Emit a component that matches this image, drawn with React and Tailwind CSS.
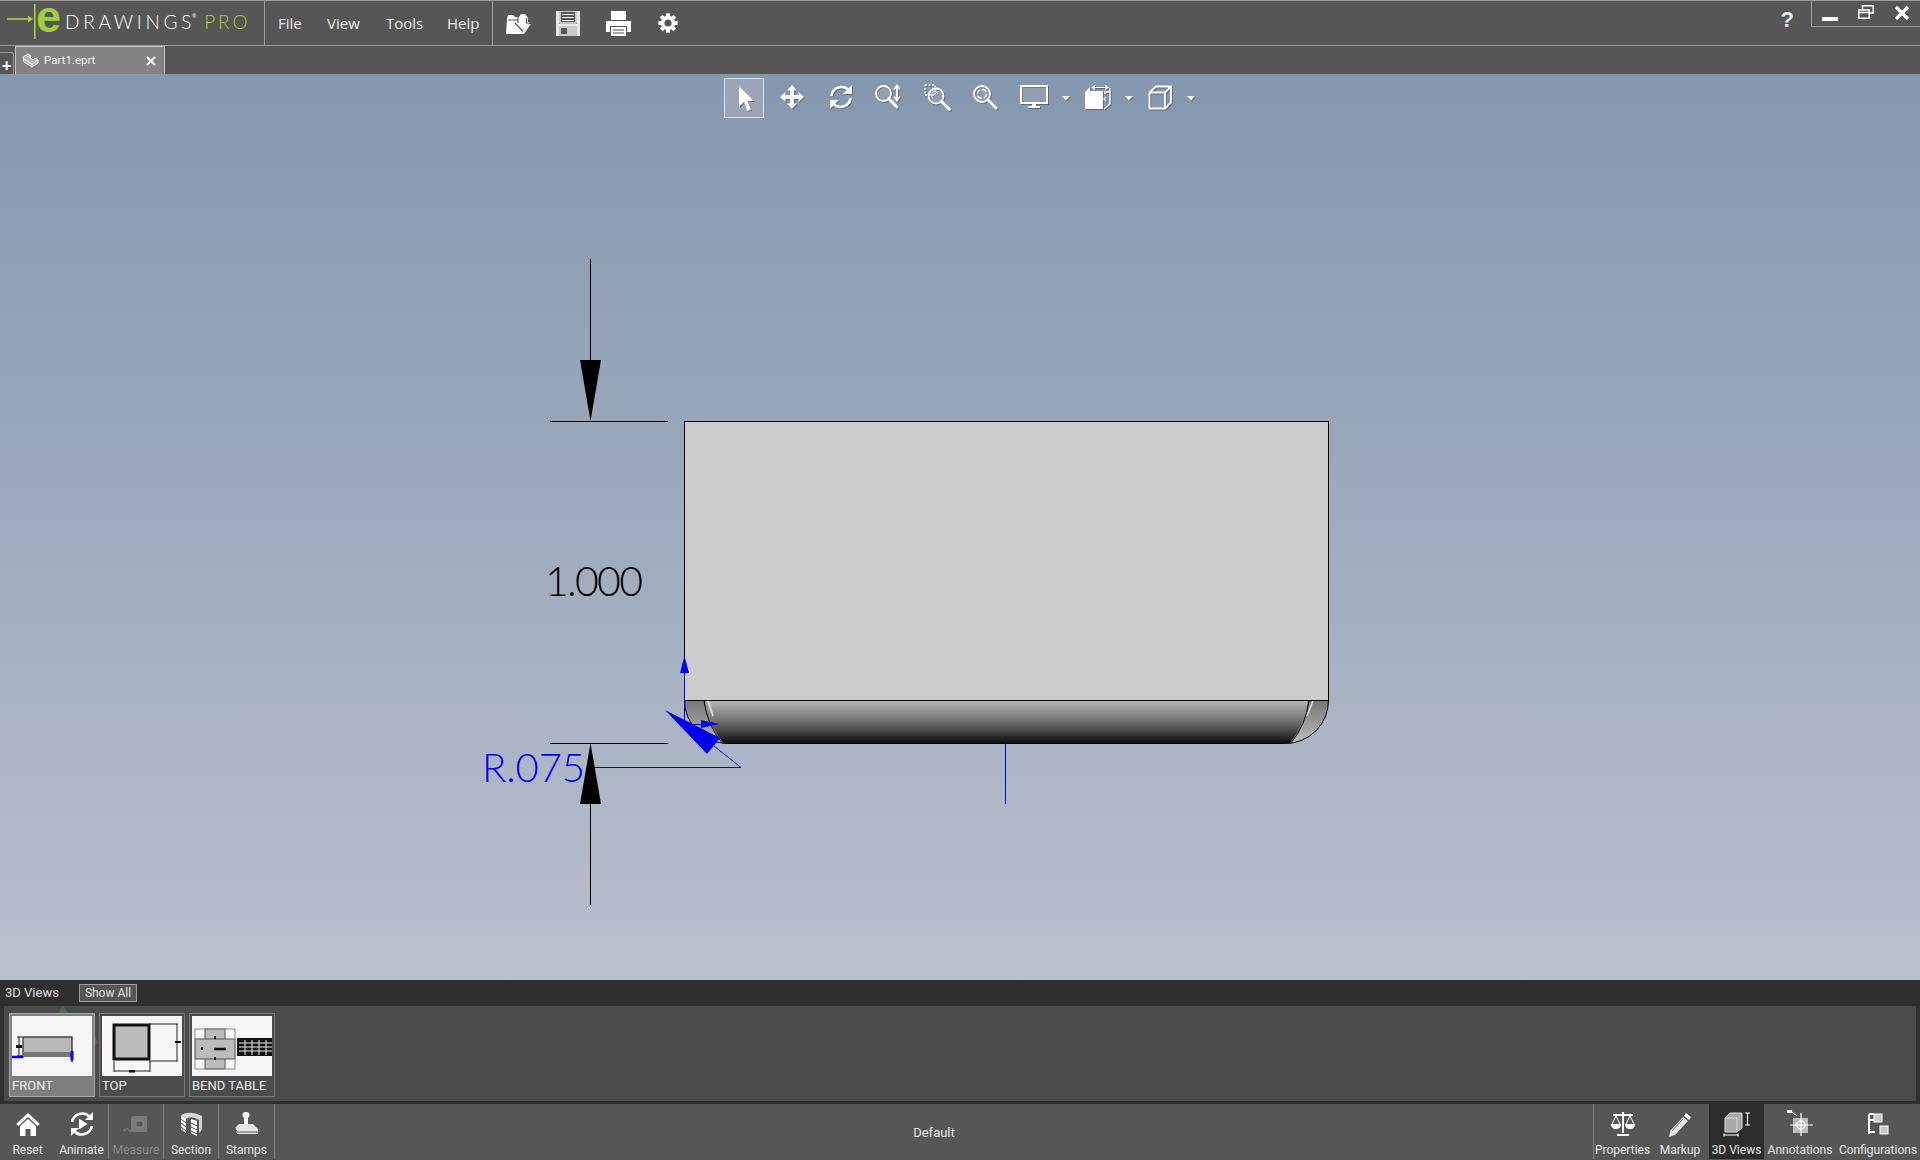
import React from "react";

const font = { fontFamily: '"Open Sans","Noto Sans",sans-serif' };
const roboto = { fontFamily: 'Roboto,"Open Sans",sans-serif' };

const OpenIcon = () => (
  <svg width="25" height="21" viewBox="0 0 25 21" className="block shrink-0">
    <path d="M1 6 L2 2 H7 L9 4 H13 L15 1 H19 L22 5 V9 H24 L17 21 H0 Z" fill="#fff" />
    <path d="M2 7 H12" stroke="#555655" strokeWidth="1" />
    <path d="M12 2 L12 10 M9 10 L17.5 19 L24 10 H20.5 V5" fill="none" stroke="#555655" strokeWidth="1.2" />
    <path d="M21 11 H25 L18 21 H15 Z" fill="#e8e8e8" />
  </svg>
);
const SaveIcon = () => (
  <svg width="24" height="25" viewBox="0 0 24 25" className="block shrink-0">
    <rect width="24" height="25" fill="#e6e6e6" />
    <rect x="3" y="0" width="18" height="13" fill="#555655" />
    <rect x="4" y="0" width="16" height="12" fill="none" stroke="#fff" strokeWidth="1.3" />
    <path d="M6 3.5 H18 M6 6.5 H18 M6 9.5 H18" stroke="#fff" strokeWidth="1.2" />
    <rect x="3" y="15" width="18" height="10" fill="#c9c9c9" />
    <rect x="5" y="17" width="6" height="6" fill="#555655" />
  </svg>
);
const PrintIcon = () => (
  <svg width="25" height="25" viewBox="0 0 25 25" className="block shrink-0">
    <path d="M5 0 H20 V9 H5 Z" fill="#fff" />
    <path d="M0 10 H25 V21 H21 V15 H4 V21 H0 Z" fill="#fff" />
    <path d="M5 16 H20 V25 H5 Z" fill="#fff" />
    <path d="M7 19 H18 M7 22 H18" stroke="#555655" strokeWidth="1.2" />
  </svg>
);
const GearIcon = () => (
  <svg width="20" height="20" viewBox="0 0 28 28" className="block shrink-0">
    <g fill="#fff">
      {[0, 45, 90, 135, 180, 225, 270, 315].map((a) => (
        <rect key={a} x="11.2" y="0.5" width="5.6" height="6" transform={`rotate(${a} 14 14)`} />
      ))}
    </g>
    <circle cx="14" cy="14" r="7.5" fill="none" stroke="#fff" strokeWidth="5" />
  </svg>
);

const shadow = { filter: "drop-shadow(1px 1px 0.6px rgba(60,70,85,.55))" };
const SIc = ({ w = 30, h = 30, children }) => (
  <svg width={w} height={h} viewBox={`0 0 ${w} ${h}`} className="block shrink-0" style={shadow}>
    {children}
  </svg>
);

const ToolBtn = ({ children, active, w = 40 }) => (
  <div
    className={
      "flex h-[40px] items-center justify-center shrink-0 " +
      (active ? "border border-[#dfe3e9] bg-[#9aa6b8]" : "pb-[2px]")
    }
    style={{ width: w }}
  >
    {children}
  </div>
);
const Caret = () => (
  <svg width="8" height="5" viewBox="0 0 8 5" className="block shrink-0" style={shadow}>
    <path d="M0 0 H8 L4 4.5 Z" fill="#fff" />
  </svg>
);

function Toolbar() {
  const mag = (cx, cy, r = 8.5) => (
    <>
      <circle cx={cx} cy={cy} r={r} fill="rgba(255,255,255,.14)" stroke="#fff" strokeWidth="1.8" />
      <path d={`M${cx + r * 0.72} ${cy + r * 0.72} L${cx + r + 6} ${cy + r + 6}`} stroke="#fff" strokeWidth="3" strokeLinecap="round" />
    </>
  );
  return (
    <div className="absolute left-[724px] top-[4px] flex items-center">
      <ToolBtn active>
        <SIc w={24} h={30}>
          <path d="M7 3 L7 24 L12 19 L15.5 28 L19 26.5 L15.5 18 L22 18 Z" fill="#fff" />
        </SIc>
      </ToolBtn>
      <ToolBtn w={56}>
        <SIc w={26} h={26}>
          <path d="M13 1 L18 6.5 H15 V11 H19.5 V8 L25 13 L19.5 18 V15 H15 V19.5 H18 L13 25 L8 19.5 H11 V15 H6.5 V18 L1 13 L6.5 8 V11 H11 V6.5 H8 Z" fill="#fff" />
        </SIc>
      </ToolBtn>
      <ToolBtn w={42}>
        <SIc w={28} h={28}>
          <path d="M4.5 13 A 10 10 0 0 1 22 7.5" fill="none" stroke="#fff" strokeWidth="2.6" />
          <path d="M25 2 L25 11 L16 11 Z" fill="#fff" />
          <path d="M23.5 15 A 10 10 0 0 1 6 20.5" fill="none" stroke="#fff" strokeWidth="2.6" />
          <path d="M3 26 L3 17 L12 17 Z" fill="#fff" />
        </SIc>
      </ToolBtn>
      <ToolBtn w={52}>
        <SIc w={28} h={28}>
          {mag(9.5, 10.5, 7.5)}
          <path d="M23 3 V17 M20 6.5 L23 2.5 L26 6.5 M20 13.5 L23 17.5 L26 13.5" fill="none" stroke="#fff" strokeWidth="1.8" />
        </SIc>
      </ToolBtn>
      <ToolBtn w={46}>
        <SIc w={28} h={28}>
          {mag(13, 13, 7.5)}
          <rect x="2" y="2" width="10" height="10" fill="none" stroke="#fff" strokeWidth="1.3" strokeDasharray="2 1.5" />
          <path d="M10 15 A 3.5 3.5 0 1 1 15 11" fill="none" stroke="#fff" strokeWidth="1" />
        </SIc>
      </ToolBtn>
      <ToolBtn w={50}>
        <SIc w={28} h={28}>
          {mag(11, 11, 8)}
          <circle cx="11" cy="11" r="4.5" fill="none" stroke="#fff" strokeWidth="1.4" strokeDasharray="5 2" />
        </SIc>
      </ToolBtn>
      <ToolBtn w={48}>
        <SIc w={28} h={26}>
          <rect x="1" y="2" width="26" height="17" fill="rgba(255,255,255,.12)" stroke="#fff" strokeWidth="2" />
          <path d="M12 19 V22 H8 V24 H20 V22 H16 V19 Z" fill="#fff" />
        </SIc>
      </ToolBtn>
      <div className="ml-[4px] mr-[7px]"><Caret /></div>
      <ToolBtn w={42}>
        <SIc w={27} h={25}>
          <path d="M0 7 L5 2 V6 H18 V24 H0 Z" fill="#fff" />
          <path d="M8 2.5 H23 M10 0.5 L7.5 2.5 L10 4.5 M20 0.5 L23 2.5 L20 4.5" fill="none" stroke="#fff" strokeWidth="1.2" />
          <path d="M25 3 L25 19 L19 24 M21 7 H26 M21 12 L19 14 L21 16 M20 9 V6" fill="none" stroke="#fff" strokeWidth="1.4" />
        </SIc>
      </ToolBtn>
      <div className="ml-[6px] mr-[6px]"><Caret /></div>
      <ToolBtn w={42}>
        <SIc w={24} h={25}>
          <path d="M1.5 7.5 H17 V23.5 H1.5 Z M1.5 7.5 L8 1.5 H23 L17 7.5 M23 1.5 V17.5 L17 23.5" fill="none" stroke="#fff" strokeWidth="1.8" strokeLinejoin="round" />
        </SIc>
      </ToolBtn>
      <div className="ml-[6px]"><Caret /></div>
    </div>
  );
}

function Canvas() {
  return (
    <svg width="1920" height="906" viewBox="0 74 1920 906" className="block">
      <defs>
        <linearGradient id="band" x1="0" y1="0" x2="0" y2="1">
          <stop offset="0" stopColor="#b4b4b4" />
          <stop offset="0.5" stopColor="#6e6e6e" />
          <stop offset="1" stopColor="#0c0c0c" />
        </linearGradient>
        <linearGradient id="side" x1="0" y1="0" x2="0" y2="1">
          <stop offset="0" stopColor="#767676" />
          <stop offset="1" stopColor="#bcbcbc" />
        </linearGradient>
      </defs>
      <rect x="684.5" y="421.5" width="644" height="279" fill="#cccccc" stroke="#000" strokeWidth="1" />
      <path d="M684.5 700.5 A 43 43 0 0 0 727.5 743.5 H1285.5 A 43 43 0 0 0 1328.5 700.5 Z" fill="url(#side)" stroke="#000" strokeWidth="1" />
      <path d="M705 700.5 Q 708 725 723.5 743.5 H1289.5 Q 1305 725 1308 700.5 Z" fill="url(#band)" />
      <path d="M704 700.5 Q 707 725 722.5 743.5 M1309 700.5 Q 1306 725 1290.5 743.5" fill="none" stroke="#000" strokeWidth="1" />
      <path d="M708 700.5 L 713 716 M1313 700.5 L 1307 716" fill="none" stroke="#e8e8e8" strokeWidth="1.5" />
      <line x1="684" y1="700.5" x2="1329" y2="700.5" stroke="#000" strokeWidth="1" />

      <path d="M590.5 259 V361 M550 421.5 H668 M550 743.5 H668 M590.5 804 V905" stroke="#000" strokeWidth="1" fill="none" />
      <path d="M580 360 H601 L590.5 421 Z" fill="#000" />
      <text x="545" y="596" fontSize="41" fill="#000" textLength="98" lengthAdjust="spacing" style={{ fontFamily: '"Lato",sans-serif', fontWeight: 300 }}>1.000</text>

      <path d="M684.5 672 V720 M1005.5 743 V804 M590 767.5 H741 L714 746 M684 724.5 H702" stroke="#0000f0" strokeWidth="1" fill="none" />
      <path d="M684.5 656 L680 673 H689 Z" fill="#0000f0" />
      <path d="M665 710 L720 738 L707 754 Z" fill="#0000f0" />
      <path d="M719 724 L701 720 V728 Z" fill="#0000f0" />
      <text x="482" y="782" fontSize="40" fill="#0000f0" textLength="103" lengthAdjust="spacing" style={{ fontFamily: '"Lato",sans-serif', fontWeight: 300 }}>R.075</text>
      <path d="M580 804 H601 L590.5 743 Z" fill="#000" />
    </svg>
  );
}

function Thumb({ label, active, w, children }) {
  return (
    <div
      className={
        "flex h-[84px] flex-col items-center border " +
        (active ? "border-[#a8a8a8] bg-[#7e7e7e]" : "border-[#7a7a7a] bg-[#4a4b4d]")
      }
      style={{ width: w }}
    >
      <div className="mt-[2px] h-[60px] w-[80px] bg-[#f6f6f6]">{children}</div>
      <div className="w-full pl-[2px] text-[13px] leading-[20px] text-[#ececec]" style={roboto}>{label}</div>
    </div>
  );
}

const BItem = ({ label, w, divider, active, disabled, children }) => (
  <div
    className={
      "flex h-[55px] shrink-0 flex-col items-center " +
      (divider ? "border-r border-[#808080] " : "") +
      (active ? "bg-[#2c2c2c]" : "")
    }
    style={{ width: w }}
  >
    <div className="flex h-[38px] items-end justify-center pb-[5px]">{children}</div>
    <div className={"whitespace-nowrap text-[12px] leading-[16px] " + (disabled ? "text-[#8a8a8a]" : "text-[#e8e8e8]")} style={roboto}>{label}</div>
  </div>
);

const Logo = () => (
  <div className="relative flex h-full w-[265px] shrink-0 items-center border-r border-[#9a9a9a] pb-[3px]">
    <svg width="64" height="44" viewBox="0 0 64 44" className="absolute left-0 top-0 block">
      <path d="M7 18 H31" stroke="#a4d039" strokeWidth="1.6" />
      <path d="M28 14.5 L33 18 L28 21.5 Z" fill="#a4d039" />
      <rect x="34" y="3" width="1.6" height="35" fill="#a4d039" />
      <text x="36" y="31" fontSize="45" fontWeight="700" fill="#a2ce3a" style={{ fontFamily: '"Liberation Sans",sans-serif' }}>e</text>
    </svg>
    <span className="ml-[65px] text-[19px] leading-none tracking-[0.195em] text-white" style={{ fontFamily: '"Lato",sans-serif', fontWeight: 300 }}>
      DRAWINGS
    </span>
    <span className="mb-[10px] ml-[-3px] text-[5px] leading-none text-white">®</span>
    <span className="ml-[8px] text-[19px] leading-none tracking-[0.15em] text-[#a4d039]" style={{ fontFamily: '"Lato",sans-serif', fontWeight: 300 }}>
      PRO
    </span>
  </div>
);

export default function App() {
  return (
    <div className="flex h-[1160px] w-[1920px] flex-col overflow-hidden bg-[#555655]" style={font}>
      <div className="flex h-[46px] shrink-0 items-stretch border-y border-[#9a9a9a] bg-[#555655]">
        <Logo />
        <div className="flex w-[228px] shrink-0 items-center border-r border-[#9a9a9a] pl-[13px] text-[15px] text-[#ececec]">
          <span className="w-[49px]">File</span>
          <span className="w-[59px]">View</span>
          <span className="w-[61px]">Tools</span>
          <span>Help</span>
        </div>
        <div className="flex items-center pl-[13px]">
          <OpenIcon />
          <div className="ml-[25px]"><SaveIcon /></div>
          <div className="ml-[26px]"><PrintIcon /></div>
          <div className="ml-[27px]"><GearIcon /></div>
        </div>
        <div className="ml-auto flex h-full items-start">
          <span className="mr-[17px] mt-[2px] text-[22px] font-bold leading-[34px] text-[#ececec]" style={{ fontFamily: '"Liberation Sans",sans-serif' }}>?</span>
          <div className="flex h-[26px] w-[109px] items-start border-b border-l border-[#9a9a9a]">
            <div className="ml-[10px] mt-[16px] h-[4px] w-[16px] bg-white" />
            <svg width="16" height="16" viewBox="0 0 16 16" className="ml-[20px] mt-[4px] block">
              <path d="M4.5 4 V.75 H15.25 V8 H11.5 M.75 5 H11.25 V13.25 H.75 Z M.75 7.5 H11.25" fill="none" stroke="#fff" strokeWidth="1.5" />
            </svg>
            <svg width="16" height="16" viewBox="0 0 16 16" className="ml-[20px] mt-[4px] block">
              <path d="M2 2 L14 14 M14 2 L2 14" stroke="#fff" strokeWidth="3.4" />
            </svg>
          </div>
        </div>
      </div>

      <div className="flex h-[28px] shrink-0 items-end">
        <div className="flex h-[22px] w-[14px] items-center justify-center rounded-tr-[3px] border-r border-t border-[#9a9a9a] pt-[3px]">
          <span className="text-[17px] font-bold leading-none text-white">+</span>
        </div>
        <div className="ml-[1px] flex h-[28px] w-[150px] items-center border-x border-t border-[#c4c4c4] bg-[#838383] pl-[6px] pr-[8px]">
          <svg width="17" height="15" viewBox="0 0 17 15" className="block shrink-0">
            <path d="M1 4 L6 1 L9 3 L8 5 L11 7 L13 5 L16 7 L16 10 L10 14 L2 9 Z" fill="#b4b4b4" stroke="#f0f0f0" strokeWidth="1" />
            <path d="M2 6 L10 11 L16 7 M10 11 V14 M5 3 L9 5" fill="none" stroke="#f0f0f0" strokeWidth="1" />
          </svg>
          <span className="ml-[5px] text-[11.5px] text-[#f2f2f2]" style={roboto}>Part1.eprt</span>
          <svg width="10" height="10" viewBox="0 0 10 10" className="ml-auto block">
            <path d="M1 1 L9 9 M9 1 L1 9" stroke="#fff" strokeWidth="2" />
          </svg>
        </div>
      </div>

      <div className="relative h-[906px] shrink-0 bg-gradient-to-b from-[#8597ae] to-[#b9c0ce]">
        <Canvas />
        <Toolbar />
      </div>

      <div className="flex h-[26px] shrink-0 items-center bg-[#2f2f30] pb-[1px] pl-[5px]">
        <span className="w-[74px] text-[13px] text-[#e0e0e0]" style={roboto}>3D Views</span>
        <span className="flex h-[18px] w-[58px] items-center justify-center border border-[#a0a0a0] bg-[#555655] text-[12px] text-[#e0e0e0]" style={roboto}>Show All</span>
      </div>
      <div className="flex h-[98px] shrink-0 bg-[#2f2f30] px-[4px] pb-[3px]">
        <div className="relative flex h-full w-full items-start gap-[4px] bg-[#4a4b4d] pl-[5px] pt-[7px]">
          <Thumb label="FRONT" active w={86}>
            <svg width="80" height="60" viewBox="0 0 80 60" className="block">
              <rect x="11" y="21" width="49" height="19" fill="#b8b8b8" stroke="#222" strokeWidth="1.2" />
              <rect x="11" y="36" width="49" height="4" fill="#777" />
              <path d="M5 21 H10 M5 40 H10 M7 21 V40" stroke="#111" fill="none" />
              <rect x="4" y="29" width="6" height="3" fill="#111" />
              <path d="M0 41 H10 L11 40" stroke="#0000f0" strokeWidth="2.5" fill="none" />
              <path d="M60 35 V44" stroke="#0000f0" strokeWidth="3" />
              <path d="M60 44 V46" stroke="#e01030" strokeWidth="2" />
            </svg>
          </Thumb>
          <Thumb label="TOP" w={86}>
            <svg width="80" height="60" viewBox="0 0 80 60" className="block">
              <rect x="12" y="9" width="35" height="34" fill="#bcbcbc" stroke="#111" strokeWidth="3" />
              <path d="M47 8 H76 M47 45 H76 M75 8 V45 M12 45 V56 M48 45 V56 M12 55 H48" stroke="#222" fill="none" />
              <rect x="73" y="25" width="6" height="2" fill="#111" />
              <rect x="27" y="54" width="6" height="2.5" fill="#111" />
            </svg>
          </Thumb>
          <Thumb label="BEND TABLE" w={86}>
            <svg width="80" height="60" viewBox="0 0 80 60" className="block">
              <rect x="13" y="13" width="20" height="40" fill="#bcbcbc" stroke="#555" />
              <rect x="3" y="23" width="40" height="20" fill="#bcbcbc" stroke="#555" />
              <rect x="3" y="13" width="40" height="40" fill="none" stroke="#888" />
              <path d="M22 33 H34" stroke="#111" strokeWidth="2.5" />
              <rect x="22" y="20" width="2" height="3" fill="#111" />
              <rect x="22" y="41" width="2" height="3" fill="#111" />
              <rect x="9" y="31" width="2" height="3" fill="#111" />
              <rect x="45" y="22" width="35" height="18" fill="#111" />
              <path d="M47 27 H80 M47 31 H80 M47 35 H80 M53 24 V39 M60 24 V39 M67 24 V39 M74 24 V39" stroke="#eee" strokeWidth="1" />
            </svg>
          </Thumb>
          <svg width="10" height="7" viewBox="0 0 10 7" className="absolute left-[54px] top-0 block">
            <path d="M5 0 L10 7 H0 Z" fill="#4f6b52" />
          </svg>
          <svg width="4" height="10" viewBox="0 0 4 10" className="absolute left-[91px] top-[31px] block">
            <path d="M0 0 L4 5 L0 10 Z" fill="#64505a" />
          </svg>
        </div>
      </div>

      <div className="flex h-[55px] shrink-0 items-stretch bg-[#555655] text-[12px]">
        <BItem label="Reset" w={55}>
          <svg width="26" height="26" viewBox="0 0 26 26" className="block">
            <path d="M13 2 L25 13 L22.5 15 L13 6 L3.5 15 L1 13 Z" fill="#fff" />
            <path d="M5 15 L13 8 L21 15 V25 H15.5 V18 H10.5 V25 H5 Z" fill="#fff" />
          </svg>
        </BItem>
        <BItem label="Animate" w={54} divider>
          <svg width="26" height="26" viewBox="0 0 26 26" className="block">
            <path d="M3 11 A 10.5 10.5 0 0 1 21 6" fill="none" stroke="#fff" strokeWidth="2.6" />
            <path d="M24 1 V9 H16 Z" fill="#fff" />
            <path d="M23 15 A 10.5 10.5 0 0 1 5 20" fill="none" stroke="#fff" strokeWidth="2.6" />
            <path d="M2 25 V17 H10 Z" fill="#fff" />
            <path d="M10 7.5 L18.5 13 L10 18.5 Z" fill="#fff" />
          </svg>
        </BItem>
        <BItem label="Measure" w={55} divider disabled>
          <svg width="26" height="26" viewBox="0 0 26 26" className="block">
            <path d="M11 5 H24 V21 H11 A 3 3 0 0 1 8 18 V8 A 3 3 0 0 1 11 5 Z" fill="#7a7a7a" />
            <rect x="13" y="10" width="7" height="6" fill="#555655" stroke="#8a8a8a" />
            <path d="M1 20 Q 4 16 6 19 T 9 18" fill="none" stroke="#7a7a7a" strokeWidth="2" strokeDasharray="2 1" />
          </svg>
        </BItem>
        <BItem label="Section" w={55} divider>
          <svg width="26" height="26" viewBox="0 0 26 26" className="block">
            <path d="M3 4 Q 13 -1 24 5 V17 Q 24 20 21 22 V9 Q 13 4 8 8 V20 L3 17 Z" fill="#d4d4d4" />
            <path d="M3 5 L8 8 V22 L3 18 Z" fill="#fff" />
            <path d="M3 8 L8 12 M3 12 L8 16 M3 16 L8 20" stroke="#444" strokeWidth="1" />
            <path d="M13 8 L19 10 V25 L13 22 Z" fill="#fff" />
            <path d="M13 12 L19 15 M13 16 L19 19 M13 20 L19 23" stroke="#444" strokeWidth="1" />
          </svg>
        </BItem>
        <BItem label="Stamps" w={56} divider>
          <svg width="26" height="26" viewBox="0 0 26 26" className="block">
            <ellipse cx="12" cy="4" rx="3.6" ry="3" fill="#fff" />
            <path d="M10 7 H14 V13 H10 Z" fill="#fff" />
            <path d="M5 13 H19 L24 18 V23 H3 L1 17 Z" fill="#e4e4e4" />
            <path d="M1 17 L3 21 H24" fill="none" stroke="#555655" strokeWidth="1" />
          </svg>
        </BItem>
        <div className="flex flex-1 items-center justify-center pt-[3px] text-[13px] text-[#e8e8e8]" style={roboto}>Default</div>
        <div className="flex border-l border-[#808080]">
          <BItem label="Properties" w={57}>
            <svg width="26" height="26" viewBox="0 0 26 26" className="block">
              <path d="M13 1 V22 M3 4 H23 M7 24 H19" stroke="#fff" strokeWidth="2" fill="none" />
              <path d="M6 5 L2 13 M6 5 L10 13 M20 5 L16 13 M20 5 L24 13" stroke="#fff" strokeWidth="1" fill="none" />
              <path d="M1 13 H11 Q 11 18 6 18 Q 1 18 1 13 Z M15 13 H25 Q 25 18 20 18 Q 15 18 15 13 Z" fill="#fff" />
            </svg>
          </BItem>
          <BItem label="Markup" w={58}>
            <svg width="26" height="26" viewBox="0 0 26 26" className="block">
              <path d="M19 2 L24 6 L22 9 L17 5 Z" fill="#fff" />
              <path d="M16 6 L21 10 L8 24 L2 26 L3.5 19.5 Z" fill="#e4e4e4" />
              <path d="M5 20 L16 8" stroke="#777" strokeWidth="1" />
            </svg>
          </BItem>
          <BItem label="3D Views" w={55} active>
            <svg width="28" height="26" viewBox="0 0 28 26" className="block">
              <path d="M2 7 L7 2 H19 V17 L14 21 H2 Z" fill="#a8a8a8" stroke="#ddd" strokeWidth="1" />
              <path d="M2 7 H14 V21" fill="none" stroke="#ddd" strokeWidth="1" />
              <path d="M22 2 H27 M24.5 2 V14 M22 14 H27 M1 24 H15 M1 22.5 V25.5 M15 22.5 V25.5" stroke="#fff" strokeWidth="1.2" fill="none" />
            </svg>
          </BItem>
          <BItem label="Annotations" w={72}>
            <svg width="28" height="28" viewBox="0 0 28 28" className="block">
              <rect x="7" y="9" width="15" height="15" fill="#bdbdbd" />
              <path d="M15 4 V27 M4 16 H27" stroke="#fff" strokeWidth="1.2" />
              <circle cx="15" cy="16" r="4" fill="none" stroke="#fff" strokeWidth="1.4" />
              <rect x="1" y="1" width="5" height="3" fill="#fff" />
              <path d="M6 3 L11 7" stroke="#fff" strokeWidth="1" />
            </svg>
          </BItem>
          <BItem label="Configurations" w={84}>
            <svg width="26" height="26" viewBox="0 0 26 26" className="block">
              <path d="M4 3 V23 M4 9 H10 M4 21 H10 M4 3 H9" stroke="#fff" strokeWidth="2" fill="none" />
              <rect x="9" y="3" width="8" height="8" fill="#c8c8c8" stroke="#fff" />
              <rect x="15" y="15" width="8" height="8" fill="#c8c8c8" stroke="#fff" />
            </svg>
          </BItem>
        </div>
      </div>
    </div>
  );
}
